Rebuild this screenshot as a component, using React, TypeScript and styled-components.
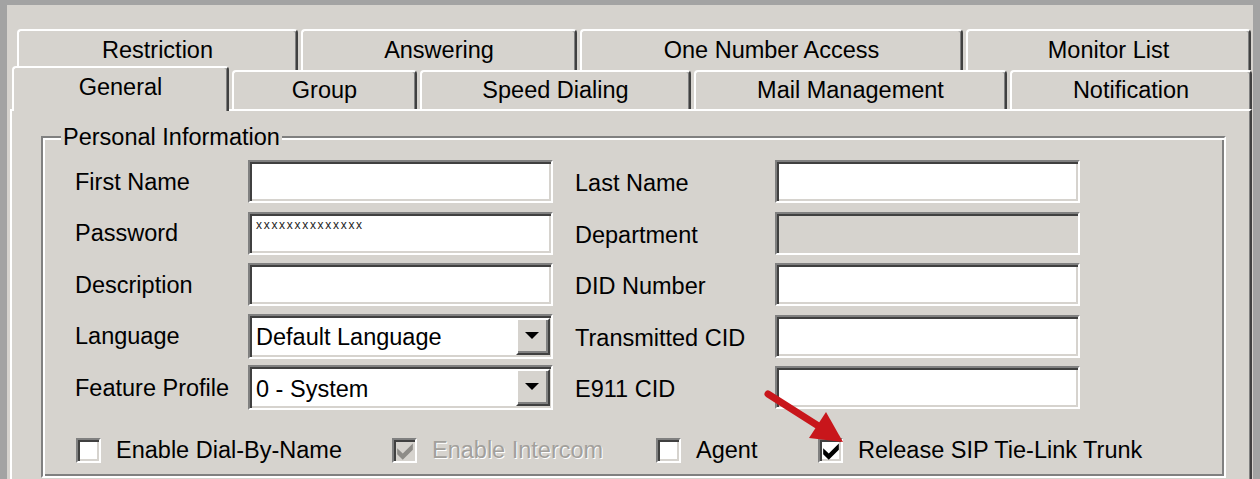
import React from 'react';
import styled, { createGlobalStyle } from 'styled-components';

const face = '#d6d3ce';
const shadow = '#808080';
const darkShadow = '#404040';

const GlobalStyle = createGlobalStyle`
  html, body {
    margin: 0;
    height: 100%;
    overflow: hidden;
    background: #a3a3a3;
  }
  #root {
    height: 100%;
  }
  * {
    box-sizing: border-box;
  }
`

const Page = styled.div`
  position: relative;
  height: 100%;
  padding: 5px 7px 0 7px;
  font-family: "Liberation Sans", Arial, sans-serif;
  font-size: 23.5px;
  color: #000;
`

const Window = styled.div`
  display: flex;
  flex-direction: column;
  height: 100%;
  background: ${face};
  padding-top: 24px;
`

const TabStrip = styled.div`
  display: flex;
  flex-direction: column;
`

const TabRow = styled.div<{ $indent: number; $height: number }>`
  display: flex;
  align-items: flex-end;
  gap: 3px;
  height: ${({ $height }) => $height}px;
  padding-left: ${({ $indent }) => $indent}px;
`

const Tab = styled.div<{ $width: number; $active?: boolean; $back?: boolean }>`
  position: relative;
  width: ${({ $width }) => $width}px;
  height: ${({ $active, $back }) => ($back ? 41 : $active ? 45 : 39)}px;
  margin-top: ${({ $active }) => ($active ? -4 : 0)}px;
  margin-bottom: ${({ $active }) => ($active ? -2 : 0)}px;
  padding-bottom: ${({ $active }) => ($active ? 5 : 0)}px;
  z-index: ${({ $active }) => ($active ? 2 : 1)};
  display: flex;
  align-items: center;
  justify-content: center;
  background: ${face};
  border-top: 2px solid #fff;
  border-left: 2px solid #fff;
  border-right: 2px solid ${darkShadow};
  border-radius: 4px 4px 0 0;
  box-shadow: inset -1px 0 0 ${shadow};
  white-space: nowrap;
`

const Panel = styled.div`
  position: relative;
  flex: 1;
  margin: 0 1px 0 3px;
  padding: 25px 24px 0 29px;
  border-top: 2px solid #fff;
  border-left: 2px solid #fff;
  border-right: 2px solid ${darkShadow};
  box-shadow: inset -1px 0 0 ${shadow};
`

const GroupBox = styled.div`
  position: relative;
  padding: 22px 0 12px 32px;
  border-top: 2px solid ${shadow};
  border-left: 2px solid ${shadow};
  border-right: 2px solid #fff;
  border-bottom: 2px solid #fff;
  box-shadow: inset 2px 2px 0 #fff, inset -2px -2px 0 ${shadow};
`

const Legend = styled.span`
  position: absolute;
  top: -14px;
  left: 18px;
  padding: 0 2px;
  line-height: 26px;
  background: ${face};
`

const FormGrid = styled.div`
  display: grid;
  grid-template-columns: 173px 305px 22px 200px 305px;
  grid-auto-rows: 43px;
  row-gap: 8.5px;
  align-items: center;
`

const Label = styled.div<{ $col: number }>`
  grid-column: ${({ $col }) => $col};
  padding-top: ${({ $col }) => ($col > 1 ? 4 : 1)}px;
  white-space: nowrap;
`

const Sunken = styled.div<{ $disabled?: boolean }>`
  height: 100%;
  background: ${({ $disabled }) => ($disabled ? face : '#fff')};
  border-top: 2px solid ${shadow};
  border-left: 2px solid ${shadow};
  border-right: 2px solid #fff;
  border-bottom: 2px solid #fff;
  box-shadow: inset 2px 2px 0 ${darkShadow}, inset -2px -2px 0 ${face};
`

const TextBox = styled(Sunken)<{ $col: number }>`
  grid-column: ${({ $col }) => $col};
  padding: 4px 6px;
`

const Masked = styled.span`
  display: block;
  font-size: 12px;
  letter-spacing: 1.7px;
  line-height: 14px;
  color: #222;
`

const Combo = styled(Sunken)`
  grid-column: 2;
  height: 45px;
  display: flex;
  align-items: stretch;
  padding: 2px;
`

const ComboText = styled.div`
  flex: 1;
  display: flex;
  align-items: center;
  padding: 3px 0 0 4px;
  white-space: nowrap;
`

const DropButton = styled.div`
  width: 34px;
  margin: 0 -1px 0 0;
  display: flex;
  align-items: center;
  justify-content: center;
  background: ${face};
  border-top: 2px solid #fff;
  border-left: 2px solid #fff;
  border-right: 2px solid ${darkShadow};
  border-bottom: 2px solid ${darkShadow};
  box-shadow: inset -2px -2px 0 ${shadow};

  &::after {
    content: '';
    border-left: 7px solid transparent;
    border-right: 7px solid transparent;
    border-top: 7px solid #000;
    margin: 0 2px 2px 0;
  }
`

const CheckRow = styled.div`
  display: flex;
  align-items: center;
  margin-top: 27px;
  padding-left: 1px;
  height: 28px;
`

const CheckItem = styled.label<{ $width?: number; $disabled?: boolean }>`
  display: flex;
  align-items: center;
  gap: 15px;
  width: ${({ $width }) => ($width ? `${$width}px` : 'auto')};
  color: ${({ $disabled }) => ($disabled ? '#a2a09c' : '#000')};
  text-shadow: ${({ $disabled }) => ($disabled ? '1px 1px 0 #fff' : 'none')};
  white-space: nowrap;
`

const Box = styled(Sunken)`
  width: 25px;
  height: 25px;
  flex: none;
  display: flex;
  align-items: center;
  justify-content: center;
  padding: 2px 0 0 1px;
`

const ArrowOverlay = styled.svg`
  position: absolute;
  left: 760px;
  top: 386px;
  pointer-events: none;
`

const CheckMark: React.FC<{ color: string }> = ({ color }) => (
  <svg width="16" height="17" viewBox="0 0 7 7.6">
    <polygon points="0,2.3 2.5,4.7 7,0.2 7,3 2.5,7.5 0,5" fill={color} />
  </svg>
)

const Check: React.FC<{ label: string; checked?: boolean; disabled?: boolean; width?: number }> = ({
  label,
  checked,
  disabled,
  width,
}) => (
  <CheckItem $width={width} $disabled={disabled}>
    <Box $disabled={disabled}>{checked && <CheckMark color={disabled ? '#8e8c88' : '#000'} />}</Box>
    <span>{label}</span>
  </CheckItem>
)

const backTabs = [
  { name: 'Restriction', width: 281 },
  { name: 'Answering', width: 276 },
  { name: 'One Number Access', width: 383 },
  { name: 'Monitor List', width: 285 },
]

const frontTabs = [
  { name: 'General', width: 217, active: true },
  { name: 'Group', width: 185 },
  { name: 'Speed Dialing', width: 271 },
  { name: 'Mail Management', width: 313 },
  { name: 'Notification', width: 242 },
]

export default function App() {
  return (
    <Page>
      <GlobalStyle />
      <Window>
        <TabStrip>
          <TabRow $indent={10} $height={41}>
            {backTabs.map(t => (
              <Tab key={t.name} $width={t.width} $back>
                {t.name}
              </Tab>
            ))}
          </TabRow>
          <TabRow $indent={5} $height={39}>
            {frontTabs.map(t => (
              <Tab key={t.name} $width={t.width} $active={t.active}>
                {t.name}
              </Tab>
            ))}
          </TabRow>
        </TabStrip>
        <Panel>
          <GroupBox>
            <Legend>Personal Information</Legend>
            <FormGrid>
              <Label $col={1}>First Name</Label>
              <TextBox $col={2} />
              <Label $col={4}>Last Name</Label>
              <TextBox $col={5} />

              <Label $col={1}>Password</Label>
              <TextBox $col={2}>
                <Masked>xxxxxxxxxxxxxx</Masked>
              </TextBox>
              <Label $col={4}>Department</Label>
              <TextBox $col={5} $disabled />

              <Label $col={1}>Description</Label>
              <TextBox $col={2} />
              <Label $col={4}>DID Number</Label>
              <TextBox $col={5} />

              <Label $col={1}>Language</Label>
              <Combo>
                <ComboText>Default Language</ComboText>
                <DropButton />
              </Combo>
              <Label $col={4}>Transmitted CID</Label>
              <TextBox $col={5} />

              <Label $col={1}>Feature Profile</Label>
              <Combo>
                <ComboText>0 - System</ComboText>
                <DropButton />
              </Combo>
              <Label $col={4}>E911 CID</Label>
              <TextBox $col={5} />
            </FormGrid>
            <CheckRow>
              <Check label="Enable Dial-By-Name" width={316} />
              <Check label="Enable Intercom" checked disabled width={264} />
              <Check label="Agent" width={162} />
              <Check label="Release SIP Tie-Link Trunk" checked />
            </CheckRow>
          </GroupBox>
        </Panel>
      </Window>
      <ArrowOverlay width="90" height="62" viewBox="760 386 90 62">
        <line x1="768" y1="394" x2="820" y2="427" stroke="#c8161b" strokeWidth="7" strokeLinecap="round" />
        <polygon points="843,442 809,438 826,412" fill="#c8161b" />
      </ArrowOverlay>
    </Page>
  );
}
